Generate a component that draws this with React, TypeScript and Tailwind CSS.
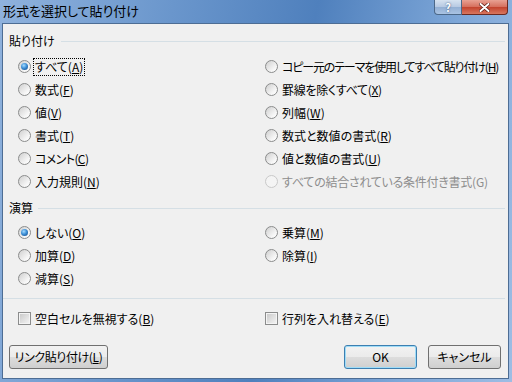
import React from 'react';

interface Opt {
  text: string;
  k?: string;
  checked?: boolean;
  disabled?: boolean;
  focus?: boolean;
  tight?: string;
}

const Radio: React.FC<{ checked?: boolean; disabled?: boolean }> = ({ checked, disabled }) => (
  <span
    className={`flex size-[13px] shrink-0 items-center justify-center rounded-full border ${
      disabled
        ? 'border-[#c9c9c9] bg-[#f4f4f4]'
        : 'border-[#8b8c8c] bg-[linear-gradient(135deg,#cfcfcf,#f6f6f6_70%,#ffffff)]'
    }`}
  >
    {checked && (
      <span className="size-[7px] rounded-full bg-[radial-gradient(circle_at_40%_35%,#a6dcff,#3d8fd6_45%,#164f8f_90%)]" />
    )}
  </span>
);

const Check: React.FC = () => (
  <span className="flex size-[13px] shrink-0 items-center justify-center border border-[#8b8c8c] bg-[#f4f4f4]">
    <span className="size-[9px] bg-[linear-gradient(135deg,#cbcbcb,#f2f2f2)]" />
  </span>
);

const Label: React.FC<{ o: Opt }> = ({ o }) => (
  <span
    className={`whitespace-nowrap px-px leading-[16px] ${o.tight ?? ''} ${o.disabled ? 'text-[#8d8d8d]' : 'text-black'} ${
      o.focus ? 'outline outline-1 outline-dotted outline-black' : ''
    }`}
  >
    {o.text}
    {o.k && (
      <>
        (<span className="underline underline-offset-[1px]">{o.k}</span>)
      </>
    )}
  </span>
);

const RadioRow: React.FC<{ o?: Opt }> = ({ o }) => (
  <div className="flex h-[23px] items-center gap-[3px]">
    {o && (
      <>
        <Radio checked={o.checked} disabled={o.disabled} />
        <Label o={o} />
      </>
    )}
  </div>
);

const pasteLeft: Opt[] = [
  { text: 'すべて', k: 'A', checked: true, focus: true },
  { text: '数式', k: 'F' },
  { text: '値', k: 'V' },
  { text: '書式', k: 'T' },
  { text: 'コメント', k: 'C', tight: 'tracking-[-0.6px]' },
  { text: '入力規則', k: 'N' },
];

const pasteRight: Opt[] = [
  { text: 'コピー元のテーマを使用してすべて貼り付け', k: 'H', tight: 'tracking-[-1.15px]' },
  { text: '罫線を除くすべて', k: 'X', tight: 'tracking-[-0.3px]' },
  { text: '列幅', k: 'W' },
  { text: '数式と数値の書式', k: 'R' },
  { text: '値と数値の書式', k: 'U' },
  { text: 'すべての結合されている条件付き書式(G)', disabled: true, tight: 'tracking-[-0.25px]' },
];

const opLeft: Opt[] = [
  { text: 'しない', k: 'O', checked: true },
  { text: '加算', k: 'D' },
  { text: '減算', k: 'S' },
];

const opRight: Opt[] = [
  { text: '乗算', k: 'M' },
  { text: '除算', k: 'I' },
];

const btn =
  'flex h-[24px] items-center justify-center rounded-[3px] border leading-none bg-[linear-gradient(#f2f2f2,#ebebeb_50%,#dddddd_50%,#cfcfcf)]';

export default function App() {
  return (
    <div className="flex h-[382px] w-[512px] flex-col bg-[linear-gradient(100deg,#8fb2dd_0%,#6a96cc_30%,#4f80bd_55%,#7ea7d8_80%,#9ebde4_100%)] pb-[3px] pl-[2px] pr-[3px] font-['Noto_Sans_CJK_JP',sans-serif] text-[12px] [font-feature-settings:'palt']">
      <div className="-ml-[2px] -mr-[3px] flex h-[23px] items-start justify-between">
        <span className="pl-[3px] pt-[1px] text-[13px] leading-[20px] text-black">形式を選択して貼り付け</span>
        <div className="mr-[4px] flex h-[15px]">
          <div className="flex w-[28px] items-center justify-center rounded-bl-[4px] border border-t-0 border-[#4c6888] bg-[linear-gradient(#d6e2f0,#b6c9e2_50%,#93afd3_50%,#a9c3e3)] text-[11px] font-bold leading-none text-white [text-shadow:0_0_2px_#2d4b72]">
            ?
          </div>
          <div className="flex w-[46px] items-center justify-center rounded-br-[4px] border border-l-0 border-t-0 border-[#6b2a22] bg-[linear-gradient(#e8a193,#d56e5c_50%,#c2412c_50%,#d8775f)]">
            <svg width="11" height="9" viewBox="0 0 11 9">
              <path d="M1.5 1 L9.5 8 M9.5 1 L1.5 8" stroke="#5a1a12" strokeWidth="3.4" strokeLinecap="round" />
              <path d="M1.5 1 L9.5 8 M9.5 1 L1.5 8" stroke="#ffffff" strokeWidth="2" strokeLinecap="round" />
            </svg>
          </div>
        </div>
      </div>

      <div className="flex flex-1 flex-col border border-[#4d6d94] bg-[#f0f0f0] pt-[9px]">
        <div className="flex items-center pl-[6px] pr-[3px]">
          <span className="leading-[16px]">貼り付け</span>
          <div className="ml-[6px] h-px flex-1 bg-[#d5dfe5]" />
        </div>
        <div className="mt-[6px] grid grid-cols-[247px_1fr] pl-[15px]">
          <div>
            {pasteLeft.map((o) => (
              <RadioRow key={o.text} o={o} />
            ))}
          </div>
          <div>
            {pasteRight.map((o) => (
              <RadioRow key={o.text} o={o} />
            ))}
          </div>
        </div>

        <div className="mt-[7px] flex items-center pl-[6px] pr-[3px]">
          <span className="leading-[16px]">演算</span>
          <div className="ml-[5px] h-px flex-1 bg-[#d5dfe5]" />
        </div>
        <div className="mt-[5px] grid grid-cols-[247px_1fr] pl-[15px]">
          <div>
            {opLeft.map((o) => (
              <RadioRow key={o.text} o={o} />
            ))}
          </div>
          <div>
            {opRight.map((o) => (
              <RadioRow key={o.text} o={o} />
            ))}
          </div>
        </div>

        <div className="mr-[3px] mt-[8px] h-px bg-[#d5dfe5]" />

        <div className="mt-[8px] grid grid-cols-[247px_1fr] pl-[15px]">
          <div className="flex h-[23px] items-center gap-[3px]">
            <Check />
            <Label o={{ text: '空白セルを無視する', k: 'B' }} />
          </div>
          <div className="flex h-[23px] items-center gap-[3px]">
            <Check />
            <Label o={{ text: '行列を入れ替える', k: 'E' }} />
          </div>
        </div>

        <div className="mt-[15px] flex pl-[6px] pr-[7px]">
          <button className={`${btn} w-[99px] border-[#707070]`}>
            <Label o={{ text: 'リンク貼り付け', k: 'L', tight: 'tracking-[-0.4px]' }} />
          </button>
          <div className="flex-1" />
          <button className={`${btn} w-[73px] border-[#3c7fb1] shadow-[inset_0_0_0_1px_#9fdcf7]`}>OK</button>
          <button className={`${btn} ml-[11px] w-[73px] border-[#707070]`}>キャンセル</button>
        </div>
      </div>
    </div>
  );
}
